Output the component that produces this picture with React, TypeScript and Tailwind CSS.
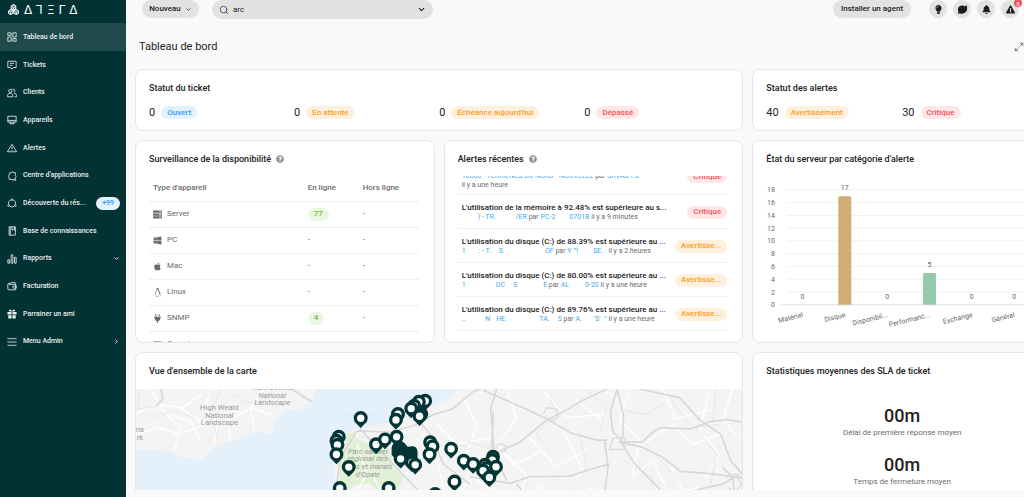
import React from 'react';
import { ChevronDown, ChevronRight, Search, Maximize2 } from 'lucide-react';
import {
  FaApple, FaBell, FaExclamationTriangle, FaLightbulb, FaLinux, FaPlug,
  FaQuestionCircle, FaServer, FaWindows, FaKeyboard,
} from 'react-icons/fa';
import clsx from 'clsx';

type Tone = 'blue' | 'orange' | 'red' | 'green';

const tones: Record<Tone, string> = {
  blue: 'bg-[#e1f1fd] text-[#2b9df0]',
  orange: 'bg-[#fff0de] text-[#fa9d1c]',
  red: 'bg-[#ffe6e7] text-[#f6515b]',
  green: 'bg-[#e9f6e1] text-[#6dbb31]',
};

const Pill = ({ tone, children }: { tone: Tone; children: React.ReactNode }) => (
  <span className={clsx('inline-flex h-[13px] shrink-0 items-center rounded-full px-[6px] text-[8px] font-medium', tones[tone])}>
    {children}
  </span>
);

const Card = ({ title, help, className, children }: {
  title: string;
  help?: boolean;
  className?: string;
  children?: React.ReactNode;
}) => (
  <section className={clsx('overflow-hidden rounded-lg border border-[#e6e6e6] bg-white pt-3', className)}>
    <h2 className="flex items-center gap-[5px] px-[13px] text-[9px] leading-3 font-medium text-[#222]">
      {title}
      {help && <FaQuestionCircle className="size-[8px] text-[#8f8f8f]" />}
    </h2>
    {children}
  </section>
);

const NavIcon = ({ children }: { children: React.ReactNode }) => (
  <svg viewBox="0 0 24 24" className="size-[10px] shrink-0" fill="none" stroke="currentColor" strokeWidth="2">
    {children}
  </svg>
);

const navItems = [
  {
    label: 'Tableau de bord',
    active: true,
    icon: <path d="M2 2h8v6H2zM2 12h8v10H2zM14 2h8v10h-8zM14 16h8v6h-8z" />,
  },
  {
    label: 'Tickets',
    icon: <path d="M2 3h20v15h-7l-3 4-3-4H2zM7 8h10M7 13h6" />,
  },
  {
    label: 'Clients',
    icon: <path d="M8 3a4 4 0 1 0 0 8 4 4 0 0 0 0-8zM1 21v-3c0-3 3-5 7-5 3 0 6 2 6 5v3zM13 3a4 4 0 1 1 3 8M17 13c4 0 6 2 6 5v3h-5" />,
  },
  {
    label: 'Appareils',
    icon: <path d="M2 3h20v14H2zM2 13h20M8 17v4M16 17v4M6 21h12" />,
  },
  {
    label: 'Alertes',
    icon: <path d="M12 3 1 21h22zM12 9v6M12 17v2" />,
  },
  {
    label: "Centre d'applications",
    icon: <path d="M7 4h4a2 2 0 0 1 4 0h5v7a3 3 0 0 1 0 5v4h-4a2 2 0 0 1-4 0H5v-5a3 3 0 0 1 0-5zM16 22h6" />,
  },
  {
    label: 'Découverte du rés...',
    badge: '+99',
    icon: (
      <>
        <path d="M9 5a8 8 0 0 0-5 10M15 5a8 8 0 0 1 5 10M7 20a9 9 0 0 0 10 0" />
        <circle cx="12" cy="4" r="2" />
        <circle cx="4" cy="18" r="2" />
        <circle cx="20" cy="18" r="2" />
      </>
    ),
  },
  {
    label: 'Base de connaissances',
    icon: <path d="M5 2h15v20H5zM8 2v20M12 2v8l3-2 3 2V2" />,
  },
  {
    label: 'Rapports',
    chevron: 'down',
    icon: <path d="M2 14h4v8H2zM10 2h4v20h-4zM18 8h4v14h-4z" />,
  },
  {
    label: 'Facturation',
    icon: <path d="M20 8V5L17 3 4 6a2 2 0 0 0-2 2v11a2 2 0 0 0 2 2h17V8H4M22 12h-6a2 2 0 0 0 0 5h6z" />,
  },
  {
    label: 'Parrainer un ami',
    icon: (
      <path
        d="M1 7h10v6H1zM13 7h10v6H13zM3 15h8v8H3zM13 15h8v8h-8zM7 1c3 0 4 2 5 5 1-3 2-5 5-5 3 1 3 5 0 5H7c-3 0-3-4 0-5z"
        fill="currentColor"
        stroke="none"
      />
    ),
  },
  {
    label: 'Menu Admin',
    chevron: 'right',
    icon: <path d="M1 4h4M9 4h14M1 12h12M17 12h6M1 20h6M11 20h12M7 2v4M15 10v4M9 18v4" />,
  },
];

const Sidebar = () => (
  <aside className="w-[126px] shrink-0 bg-[#033234] text-[#e8eeee]">
    <div className="flex h-[23px] items-center gap-[5px] pb-1 pl-2">
      <svg viewBox="0 0 24 24" className="size-[11px]" fill="none" stroke="currentColor" strokeWidth="2.4">
        <path d="M12 1 7 5v5l5 3 5-3V5zM6 12l-5 4v4l5 3 5-3v-5zM18 12l-5 3v5l5 3 5-3v-4zM7 5l5 3 5-3M12 8v5M1 16l5 2 5-3M6 18v5M13 15l5 3 5-2M18 18v5" />
      </svg>
      <div aria-label="Atera" className="flex gap-1 font-['DejaVu_Sans'] text-[12px] leading-[12px] text-white">
        <span>Δ</span>
        <span>⅂</span>
        <span>Ξ</span>
        <span>Γ</span>
        <span>Δ</span>
      </div>
    </div>
    <nav className="flex h-[332px] flex-col">
      {navItems.map((item) => (
        <a
          key={item.label}
          href="#"
          className={clsx('flex flex-1 items-center pt-px pr-[6px] pl-[7px] text-[7px] font-medium', item.active && 'bg-[#1f4a4b]')}
        >
          <NavIcon>{item.icon}</NavIcon>
          <span className="ml-[6px] flex-1 whitespace-nowrap">{item.label}</span>
          {item.badge && (
            <span className="flex h-[13px] items-center rounded-full bg-[#e4f2fe] px-[6px] text-[#2b9df0]">{item.badge}</span>
          )}
          {item.chevron === 'down' && <ChevronDown className="size-[7px]" strokeWidth={3} />}
          {item.chevron === 'right' && <ChevronRight className="size-[7px]" strokeWidth={3} />}
        </a>
      ))}
    </nav>
  </aside>
);

const RoundButton = ({ label, children }: { label: string; children: React.ReactNode }) => (
  <button aria-label={label} className="relative flex size-[18px] items-center justify-center rounded-full bg-[#e2e2e2] text-[#1c1c1c]">
    {children}
  </button>
);

const TopBar = () => (
  <header className="flex h-[23px] shrink-0 items-start pr-[5px] pl-4">
    <button className="flex h-[18px] w-[57px] items-center justify-center gap-1 rounded-full bg-[#e2e2e2] text-[8px] font-medium">
      Nouveau
      <ChevronDown className="size-[7px]" strokeWidth={2.5} />
    </button>
    <div className="ml-[13px] flex h-[19px] w-[221px] items-center rounded-full bg-[#e2e2e2] pr-[7px] pl-[7px]">
      <Search className="size-[10px] text-[#444]" strokeWidth={2} />
      <input aria-label="Rechercher" defaultValue="arc" className="ml-[4px] min-w-0 flex-1 bg-transparent text-[8px] outline-none" />
      <ChevronDown className="size-[9px]" strokeWidth={3} />
    </div>
    <div className="ml-auto flex items-start gap-[6px]">
      <button className="mr-3 h-[18px] w-[78px] rounded-full bg-[#e2e2e2] text-[8px] font-medium">Installer un agent</button>
      <RoundButton label="Idées">
        <FaLightbulb className="size-[9px]" />
      </RoundButton>
      <RoundButton label="Messages">
        <svg viewBox="0 0 24 24" className="size-[11px]" fill="currentColor">
          <path d="M11 3c2 0 4 1 5 2 2 0 3-1 3-3 3 2 4 6 3 8 1 6-5 11-11 11-2 0-4 0-5-1l-4 2 1-5C0 10 4 3 11 3z" />
        </svg>
      </RoundButton>
      <RoundButton label="Notifications">
        <FaBell className="size-[9px]" />
      </RoundButton>
      <RoundButton label="Alertes">
        <FaExclamationTriangle className="size-[9px]" />
        <span className="absolute -top-[1px] -right-[3px] flex size-[8px] items-center justify-center rounded-full bg-[#f6515b] text-[6px] font-medium text-white">
          5
        </span>
      </RoundButton>
    </div>
  </header>
);

const Count = ({ value, label, tone }: { value: number; label: string; tone: Tone }) => (
  <div className="flex items-center gap-[6px]">
    <span className="text-[11px] leading-[13px] text-[#222]">{value}</span>
    <Pill tone={tone}>{label}</Pill>
  </div>
);

const devices = [
  { name: 'Server', icon: FaServer, online: '77' },
  { name: 'PC', icon: FaWindows },
  { name: 'Mac', icon: FaApple },
  { name: 'Linux', icon: FaLinux },
  { name: 'SNMP', icon: FaPlug, online: '4' },
  { name: 'Generic', icon: FaKeyboard },
];

const DeviceTable = () => (
  <div className="mt-[10px] pr-[15px] pl-[13px]">
    <table className="w-full table-fixed text-left text-[8px] text-[#6b6b6b]">
      <thead>
        <tr className="h-[26px] border-b border-[#efefef]">
          <th className="pl-1 font-medium">Type d'appareil</th>
          <th className="w-[55px] font-medium">En ligne</th>
          <th className="w-[56px] font-medium">Hors ligne</th>
        </tr>
      </thead>
      <tbody>
        {devices.map(({ name, icon: Icon, online }) => (
          <tr key={name} className="h-[26px] border-b border-[#efefef]">
            <td className="pl-1">
              <span className="flex items-center gap-[5px]">
                <Icon className="size-[9px]" />
                {name}
              </span>
            </td>
            <td>{online ? <Pill tone="green">{online}</Pill> : '-'}</td>
            <td>-</td>
          </tr>
        ))}
      </tbody>
    </table>
  </div>
);

const Gap = ({ className }: { className: string }) => <span className={clsx('inline-block', className)} />;

const Blue = ({ children }: { children: React.ReactNode }) => <a href="#" className="text-[#3fa9f0]">{children}</a>;

const alerts: { title: string; detail: React.ReactNode; label: string; tone: Tone }[] = [
  {
    title: "L'utilisation de la mémoire à 92.48% est supérieure au s...",
    detail: <><Gap className="w-4" /><Blue>) - TR.<Gap className="w-5" />/ER</Blue> par <Blue>PC-2<Gap className="w-[14px]" />0701B</Blue> il y a 9 minutes</>,
    label: 'Critique',
    tone: 'red',
  },
  {
    title: "L'utilisation du disque (C:) de 88.39% est supérieure au ...",
    detail: <><Blue>1<Gap className="w-[13px]" />: - T.<Gap className="w-2" />S<Gap className="w-[42px]" />OF</Blue> par <Blue>Y "'!<Gap className="w-[15px]" />SE. .</Blue> il y a 2 heures</>,
    label: 'Avertisse...',
    tone: 'orange',
  },
  {
    title: "L'utilisation du disque (C:) de 80.00% est supérieure au ...",
    detail: <><Blue>1<Gap className="w-[30px]" />OC<Gap className="w-2" />S<Gap className="w-[26px]" />E</Blue> par <Blue>AL<Gap className="w-4" />0-20</Blue> il y a une heure</>,
    label: 'Avertisse...',
    tone: 'orange',
  },
  {
    title: "L'utilisation du disque (C:) de 89.76% est supérieure au ...",
    detail: <><Blue>..<Gap className="w-5" />N<Gap className="w-[6px]" />HE<Gap className="w-[34px]" />TA.<Gap className="w-2" />S</Blue> par <Blue>A.<Gap className="w-3" />'S'<Gap className="w-1" />"</Blue> il y a une heure</>,
    label: 'Avertisse...',
    tone: 'orange',
  },
];

const AlertList = () => (
  <div className="mt-[11px] flex h-[155px] flex-col justify-end overflow-hidden pr-[15px] pl-[13px]">
    <div className="flex h-[34px] shrink-0 items-start border-b border-[#efefef] pt-[9px] pl-1">
      <p className="flex-1 pt-[2px] text-[7px] leading-[9px] text-[#6b6b6b]">
        <Blue>10000 - TERRIENES DU NORD - NOUVELLE</Blue> par <Blue>SRVAD-FS</Blue>
        <br />
        il y a une heure
      </p>
      <Pill tone="red">Critique</Pill>
    </div>
    {alerts.map((alert) => (
      <div key={alert.title} className="flex h-[34px] shrink-0 items-center border-b border-[#efefef] pt-px pl-1">
        <div className="min-w-0 flex-1 whitespace-nowrap">
          <p className="text-[8px] leading-[10px] font-medium text-[#222]">{alert.title}</p>
          <p className="text-[7px] leading-[9px] text-[#6b6b6b]">{alert.detail}</p>
        </div>
        <Pill tone={alert.tone}>{alert.label}</Pill>
      </div>
    ))}
  </div>
);

const categories = [
  { name: 'Matériel', value: 0, color: '#d2ac75' },
  { name: 'Disque', value: 17, color: '#d2ac75' },
  { name: 'Disponibil...', value: 0, color: '#95cbab' },
  { name: 'Performanc...', value: 5, color: '#95cbab' },
  { name: 'Exchange', value: 0, color: '#95cbab' },
  { name: 'Général', value: 0, color: '#95cbab' },
];

const ticks = [0, 2, 4, 6, 8, 10, 12, 14, 16, 18];

const CategoryChart = () => (
  <svg viewBox="0 0 298 170" className="mt-[7px] w-full text-[7px]" fill="#666">
    {ticks.map((tick) => {
      const y = 133 - tick * 6.4;
      return (
        <g key={tick}>
          <text x="22" y={y + 2.5} textAnchor="end">{tick}</text>
          <path d={`M${tick ? 34 : 28} ${y}H298`} stroke={tick ? '#f0f0f0' : '#dcdcdc'} />
        </g>
      );
    })}
    {categories.map(({ name, value, color }, i) => {
      const x = 49.5 + i * 42.4;
      const top = 133 - value * 6.4;
      return (
        <g key={name}>
          {value > 0 && <path d={`M${x - 6.5} 133V${top + 1.5}q0-1.5 1.5-1.5h10q1.5 0 1.5 1.5V133z`} fill={color} />}
          <text x={x} y={top - 6} textAnchor="middle">{value}</text>
          <text x={x + 1} y="145" textAnchor="end" transform={`rotate(-14 ${x + 1} 145)`}>{name}</text>
        </g>
      );
    })}
  </svg>
);

const pins = [
  [885, 150], [866, 153], [852, 165], [843, 173], [873, 190], [868, 196],
  [803, 190], [797, 207], [691, 202], [625, 258], [618, 270], [621, 282],
  [618, 311], [655, 349], [628, 412], [737, 281], [764, 266], [799, 258],
  [845, 335], [855, 342], [811, 324], [775, 412], [900, 275], [907, 287],
  [898, 311], [915, 430], [963, 294], [1001, 330], [1029, 340], [1089, 318],
  [1087, 328], [1065, 342], [1070, 352], [1059, 360], [1098, 348],
  [1078, 380], [973, 393],
];

const MapView = () => (
  <svg viewBox="15 114 1824 420" preserveAspectRatio="xMinYMin slice" className="mt-3 w-full" fill="none">
    <path d="M15 114h1824v420H15z" fill="#e4f1fb" />
    <path d="M15 114h543l-14 36-34 26-50 6-30 33-4 35-46-9-88 33-47 18-32 40-62-14-56-20-80-1z" fill="#f4f4f4" />
    <path d="M990 114l-55 40-75 28-60 28-80 16-50 10-30 22-10 30-20 25 5 90-5 131h1229V114z" fill="#f4f4f4" />
    <path d="M640 252l34-12 4 24 34 14 50-6 22 40 6 40 30 26-14 32-60 14-30-26-44 4-16 16-36-6 8-50-14-40 10-30z" fill="#e2f1d6" />

    {/* minor roads */}
    <g stroke="#fff" strokeWidth="4">
      <path d="M15 190l60-30 80 10 60-40M60 114l40 70 80 30 30 60M130 300l20-70-50-46M240 114l-20 60 40 40-10 70M300 270l-10-60 70-40 60 20M15 250l70-20 60 20 80-30M400 114l-40 60 10 60M150 170l70 50" />
      <path d="M920 220l60 60 100-20 70 80 90-40M1000 140l40 80-30 90 50 60M1130 114l30 90-60 80 90 90-40 120M1200 260l80 90 100-60M1240 120l70 80 120-10M1300 240l60 120-70 110M1340 150l80 60M1500 114l-30 90 60 60-20 100M1540 280l90-60 60 60 80-30M1600 114l40 90 110-30M1620 340l60 120M1500 380l70-50 50 100 90-20M1740 120l-30 120 60 70-40 70M1810 114l-30 90 50 60M900 400l70 40 60-60 80 60M1220 400l80 60 90-50M680 280l30 90-60 100M730 380l60 110M920 330l30 120" />
    </g>
    <g stroke="#e7e7e7" strokeWidth="3">
      <path d="M25 114l-5 60 50-8 26-28M480 114l60 40M300 130l60 28 50-12M60 200l70-20 60 20M270 114l-30 70 20 80M930 260l80 30 80 80M1010 270l60 22 40-18M1260 140l20 50-60 60 40 60M1370 114l60 60-20 70M1090 200l-10 140M1350 250l20 100-60 90M1490 180l60 10 50-30M1540 270l110 120M1480 330l90 50-10 110M1700 230l60 80-20 120M1760 114l-10 100M1620 140l70 90 80-10M640 300l50-44 70 20" />
    </g>

    {/* motorways */}
    <g stroke="#d8d8d8" strokeWidth="5" strokeLinejoin="round">
      <path d="M90 114l6 32-22 20M484 114l60 38M640 480l-20-90 10-70 50-80 100 4 70-20 62-34 55-16 62-52 30-12" />
      <path d="M690 234l60 66 70 74 70 70 60 60M850 190l50 60 40 90 80 60M1060 118l60 26 90 40 52 26 60 36 80 22h30" />
      <path d="M1100 114l-18 60 10 120-20 30M1110 300l60-26 80-66 52-26 60-36 70-32M1090 180l-5 120 46 90" />
      <path d="M1020 378l120 20 60-20 120-2 80-26 40-10M1462 114l-20 70 8 60 22 20 14 30 30 46 70 70 40 60" />
      <path d="M1480 273l58 1 36-34 20-10 90 4 60-22 50-6 50 8" />
      <path d="M1462 114l20 80-2 60-10 20 64 14 60 28 60 46 80 6 110 14M1530 114l120 26 64 70 60 40 30 80 35 40" />
      <path d="M1425 270l10 80-12 90 10 90M1780 350l30 30 6 60 24 30M1690 420l90-20 50-30M1160 400l40 50" />
    </g>
    <g stroke="#dcdcdc" strokeWidth="4">
      <path d="M1240 190l10-20 30 4 6 24-24 14-20-14M1450 262h36v34h-46zM1100 284l14-6 16 10-6 14-20 4zM1790 380l30-10 16 30-20 30-20-20" />
      <path d="M560 180l120 16 90-10" strokeWidth="2" strokeDasharray="7 4" />
    </g>

    <g className="text-[23px]" fill="#9a9a9a" textAnchor="middle">
      <text x="266" y="177">High Weald</text>
      <text x="266" y="200">National</text>
      <text x="266" y="223">Landscape</text>
      <text x="27" y="244">ns</text>
      <text x="27" y="266">rk</text>
      <g fontStyle="italic">
        <text x="425" y="117">Kent Downs</text>
        <text x="425" y="140">National</text>
        <text x="425" y="163">Landscape</text>
        <text x="712" y="309">Parc naturel</text>
        <text x="712" y="332">régional des</text>
        <text x="712" y="355">Caps et marais</text>
        <text x="712" y="378">d'Opale</text>
      </g>
    </g>

    {/* heavily overlapping pins merge into one shape */}
    <path d="M784 290q6-22 28-20 14 6 20 18 28-8 30 14v30l-14 20-30-14-20-10-14-16z" fill="#033537" />
    {pins.map(([x, y]) => (
      <g key={`${x}-${y}`} transform={`translate(${x} ${y})`}>
        <path d="M0 29 -13 16A21 21 0 1 1 13 16z" fill="#033537" />
        <circle r="11" fill="#fff" />
      </g>
    ))}
  </svg>
);

const Sla = ({ value, label }: { value: string; label: string }) => (
  <div className="text-center">
    <p className="text-[18px] leading-5 font-medium text-[#222]">{value}</p>
    <p className="mt-[2px] text-[8px] leading-[10px] text-[#6b6b6b]">{label}</p>
  </div>
);

const App: React.FC = () => {
  return (
    <div className="flex h-screen overflow-hidden bg-[#f9f9f9] font-['Roboto',sans-serif] text-[#222]">
      <Sidebar />
      <div className="flex min-w-0 flex-1 flex-col pb-[7px]">
        <TopBar />
        <main className="min-h-0 flex-1 overflow-hidden pl-[9px]">
          <div className="flex h-[46px] items-center justify-between pt-[2px] pl-1">
            <h1 className="text-[11px]">Tableau de bord</h1>
            <button aria-label="Plein écran">
              <Maximize2 className="size-[10px] text-[#444]" strokeWidth={1.5} />
            </button>
          </div>
          {/* the board is wider than the viewport and runs off on the right */}
          <div className="-mr-7 grid grid-cols-3 gap-[9px]">
            <Card title="Statut du ticket" className="col-span-2">
              <div className="grid grid-cols-4 px-[13px] pt-3 pb-[11px]">
                <Count value={0} label="Ouvert" tone="blue" />
                <Count value={0} label="En attente" tone="orange" />
                <Count value={0} label="Échéance aujourd'hui" tone="orange" />
                <Count value={0} label="Dépassé" tone="red" />
              </div>
            </Card>
            <Card title="Statut des alertes">
              <div className="grid grid-cols-2 px-[13px] pt-3 pb-[11px]">
                <Count value={40} label="Avertissement" tone="orange" />
                <Count value={30} label="Critique" tone="red" />
              </div>
            </Card>
            <Card title="Surveillance de la disponibilité" help className="h-[203px]">
              <DeviceTable />
            </Card>
            <Card title="Alertes récentes" help className="h-[203px]">
              <AlertList />
            </Card>
            <Card title="État du serveur par catégorie d'alerte" className="h-[203px]">
              <CategoryChart />
            </Card>
            <Card title="Vue d'ensemble de la carte" className="col-span-2">
              <MapView />
            </Card>
            <Card title="Statistiques moyennes des SLA de ticket">
              <div className="mt-[29px] flex flex-col gap-[17px]">
                <Sla value="00m" label="Délai de première réponse moyen" />
                <Sla value="00m" label="Temps de fermeture moyen" />
              </div>
            </Card>
          </div>
        </main>
      </div>
    </div>
  );
};

export default App;
